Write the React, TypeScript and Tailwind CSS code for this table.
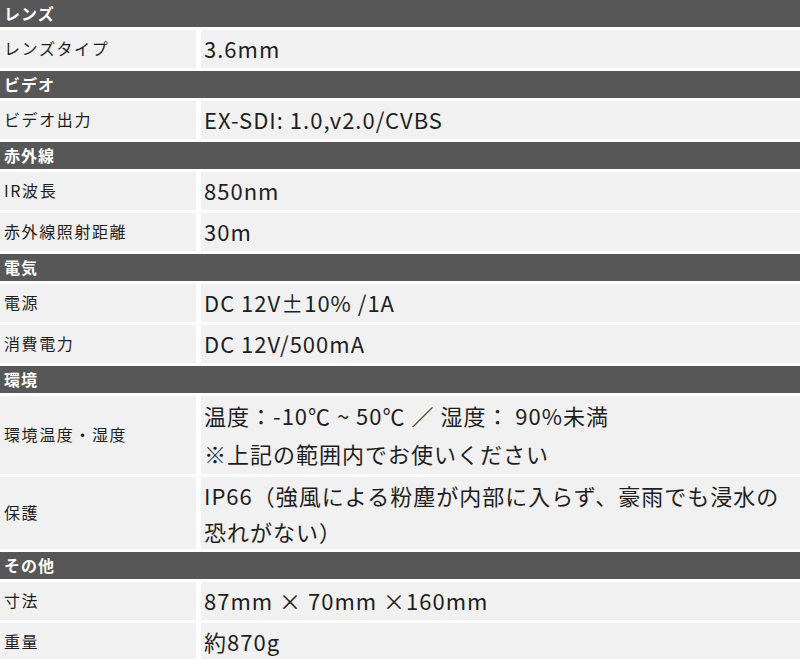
import React from "react";

type Row = { label: string; value: React.ReactNode; tall?: "a" | "b" };
type Section = { title: string; rows: Row[] };

const SPECS: Section[] = [
  { title: "レンズ", rows: [{ label: "レンズタイプ", value: "3.6mm" }] },
  { title: "ビデオ", rows: [{ label: "ビデオ出力", value: "EX-SDI: 1.0,v2.0/CVBS" }] },
  {
    title: "赤外線",
    rows: [
      { label: "IR波長", value: "850nm" },
      { label: "赤外線照射距離", value: "30m" },
    ],
  },
  {
    title: "電気",
    rows: [
      { label: "電源", value: "DC 12V±10% /1A" },
      { label: "消費電力", value: "DC 12V/500mA" },
    ],
  },
  {
    title: "環境",
    rows: [
      {
        label: "環境温度・湿度",
        tall: "a",
        value: (
          <>
            温度：-10℃ ~ 50℃ ／ 湿度： 90%未満
            <br />
            ※上記の範囲内でお使いください
          </>
        ),
      },
      {
        label: "保護",
        tall: "b",
        value: (
          <>
            IP66（強風による粉塵が内部に入らず、豪雨でも浸水の
            <br />
            恐れがない）
          </>
        ),
      },
    ],
  },
  {
    title: "その他",
    rows: [
      { label: "寸法", value: "87mm × 70mm ×160mm" },
      { label: "重量", value: "約870g" },
    ],
  },
];

export default function App() {
  return (
    <div
      className="w-[800px] h-[659px] overflow-hidden bg-white text-[#1e1e1e]"
      style={{ fontFamily: '"Noto Sans CJK JP", "Noto Sans", sans-serif' }}
    >
      <div className="grid grid-cols-[196px_1fr] gap-x-[5px] gap-y-[3px]">
        {SPECS.map((section) => (
          <React.Fragment key={section.title}>
            <div className="col-span-2 h-[27px] bg-[#575757] pl-[4px] text-[16px] font-bold leading-[27px] tracking-[1px] text-white">
              {section.title}
            </div>
            {section.rows.map((row) => (
              <React.Fragment key={row.label}>
                <div className="flex items-center bg-[#f1f1f1] pb-[3px] pl-[4px] text-[16px] tracking-[1.6px]">
                  {row.label}
                </div>
                <div
                  className={`whitespace-nowrap bg-[#f1f1f1] pl-[3px] text-[22px] tracking-[1px] ${
                    row.tall === "a"
                      ? "pb-[2px] leading-[38px]"
                      : row.tall === "b"
                      ? "leading-[36px]"
                      : "pb-[2px] leading-[36px]"
                  }`}
                >
                  {row.value}
                </div>
              </React.Fragment>
            ))}
          </React.Fragment>
        ))}
      </div>
    </div>
  );
}
